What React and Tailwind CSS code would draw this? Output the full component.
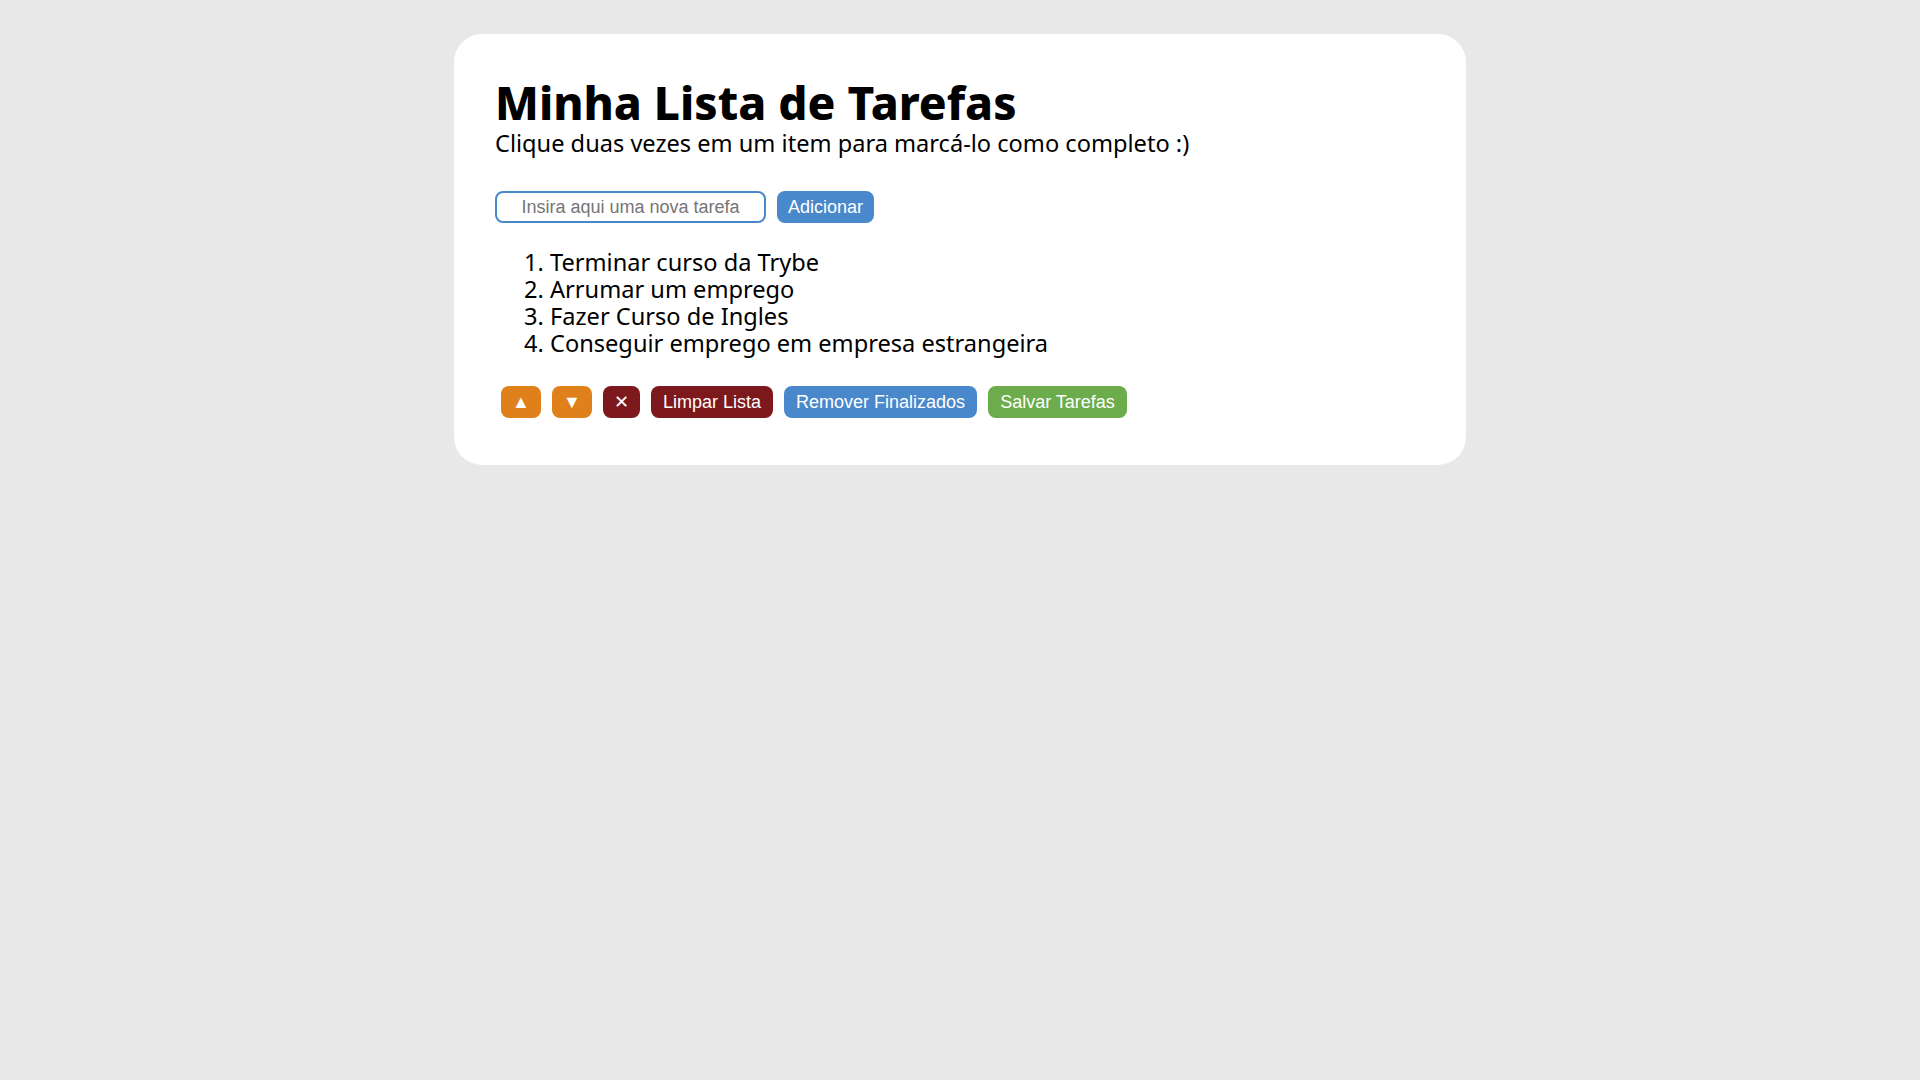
import React, { useState } from 'react';

const tasks = [
  'Terminar curso da Trybe',
  'Arrumar um emprego',
  'Fazer Curso de Ingles',
  'Conseguir emprego em empresa estrangeira'
];

const btn = 'h-[32px] rounded-[8px] text-white text-[18px] flex items-center justify-center';

const App = () => {
  const [task, setTask] = useState('');

  return (
    <div className="min-h-screen bg-[#e8e8e8] pt-[34px]">
      <div className="mx-auto w-[1012px] bg-white rounded-[28px] px-[41px] pt-[45px] pb-[47px] text-black font-['Noto_Sans',sans-serif]">
        <h1 className="text-[46px] leading-[46px] font-extrabold">Minha Lista de Tarefas</h1>
        <p className="mt-[6px] text-[23.6px] leading-[24px]">Clique duas vezes em um item para marcá-lo como completo :)</p>

        <div className="mt-[36px] flex items-center gap-[11px] font-['Liberation_Sans',Arial,sans-serif]">
          <input
            type="text"
            value={task}
            onChange={e => setTask(e.target.value)}
            placeholder="Insira aqui uma nova tarefa"
            className="w-[271px] h-[32px] border-2 border-[#4a88cc] rounded-[8px] text-center text-[18px] placeholder:text-[#757575] outline-none"
          />
          <button className={`${btn} bg-[#4a88cc] px-[11px]`}>Adicionar</button>
        </div>

        <ol className="mt-[26px] list-decimal pl-[55px] text-[23.6px] leading-[27px]">
          {tasks.map(t => (
            <li key={t}>{t}</li>
          ))}
        </ol>

        <div className="mt-[29px] ml-[6px] flex items-center gap-[11px] font-['Liberation_Sans',Arial,sans-serif]">
          <button className={`${btn} bg-[#e0801a] w-[40px] text-[15px]`}>▲</button>
          <button className={`${btn} bg-[#e0801a] w-[40px] text-[15px]`}>▼</button>
          <button className={`${btn} bg-[#7d191d] w-[37px]`}>✕</button>
          <button className={`${btn} bg-[#7d191d] px-3`}>Limpar Lista</button>
          <button className={`${btn} bg-[#4a88cc] px-3`}>Remover Finalizados</button>
          <button className={`${btn} bg-[#6cac4c] px-3`}>Salvar Tarefas</button>
        </div>
      </div>
    </div>
  );
};

export default App;
